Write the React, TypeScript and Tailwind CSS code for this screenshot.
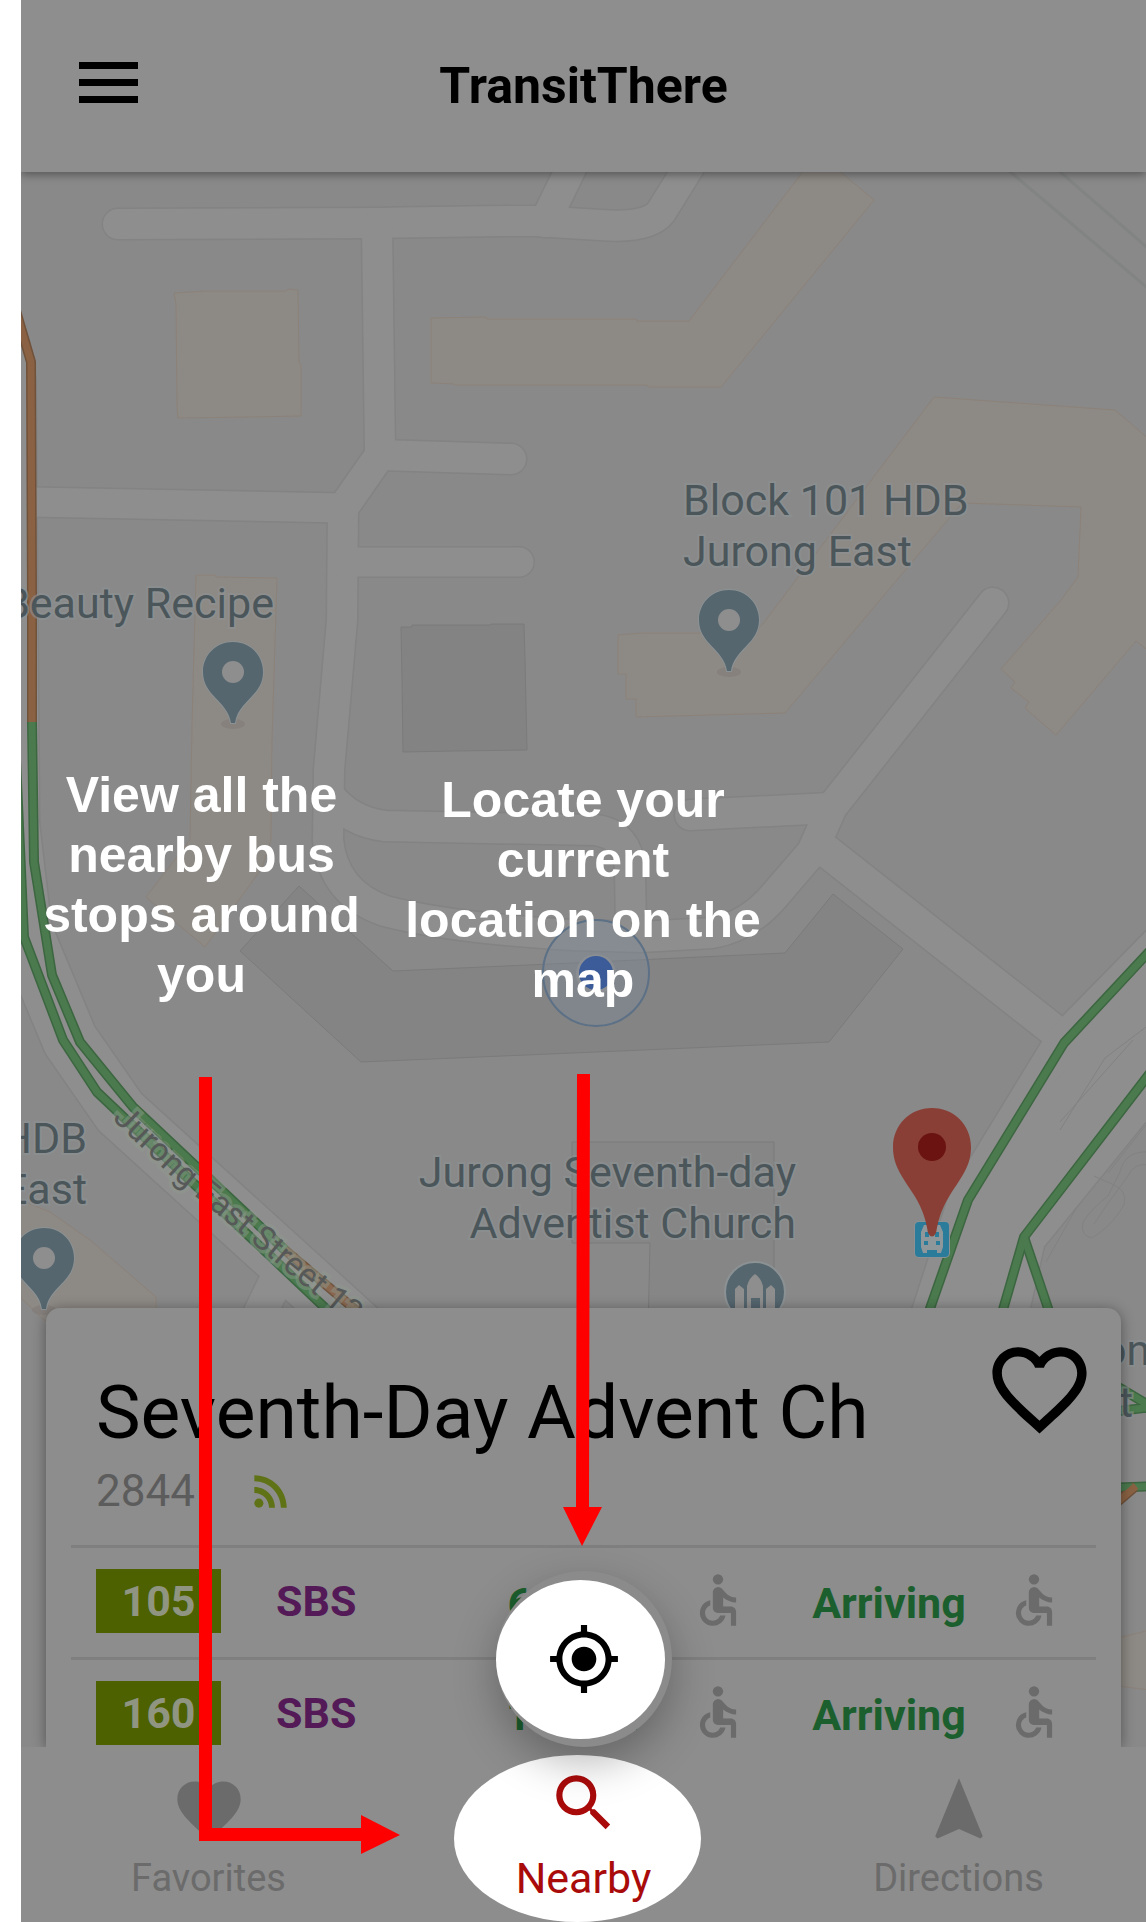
import React from "react";
import {
  MdAccessible,
  MdFavorite,
  MdFavoriteBorder,
  MdMyLocation,
  MdNavigation,
  MdRssFeed,
  MdSearch,
} from "react-icons/md";

const roads: { d: string; w: number }[] = [
  { d: "M118 224 L380 223 Q480 221 535 221 L600 225 Q648 229 661 212 L692 162", w: 31 },
  { d: "M545 222 L574 162", w: 31 },
  { d: "M377 225 L380 455 L343 508 L342 620 L329 770 L328 840 Q333 893 385 911 Q450 928 573 935 L640 937 L712 933 Q748 927 775 895 L812 852 L832 807 L993 603", w: 31 },
  { d: "M380 455 L511 459", w: 31 },
  { d: "M30 502 L343 508", w: 30 },
  { d: "M345 562 L519 562", w: 30 },
  { d: "M329 795 Q350 822 385 826 L595 830 Q628 834 630 870 L631 930", w: 31 },
  { d: "M690 815 L830 808", w: 31 },
  { d: "M825 850 L1070 1043", w: 33 },
  { d: "M4 300 L24 380 L28 880 L40 960", w: 24 },
  { d: "M4 760 L24 930 L70 1040 L120 1112 L360 1330", w: 56 },
  { d: "M286 1260 L252 1330", w: 34 },
  { d: "M1160 945 L1064 1043 L968 1200 L926 1330", w: 40 },
  { d: "M1160 1010 L1060 1130 L1000 1230 L975 1330", w: 70 },
  { d: "M1160 1070 L1024 1237 L1003 1330", w: 44 },
];

const beige = [
  "174,293 206,291 286,291 288,289 298,290 299,362 301,365 301,416 250,417 178,418 177,406 176,304",
  "431,318 486,317 487,319 636,319 637,321 689,321 808,165 832,165 874,200 721,387 648,387 647,385 455,385 454,384 431,383",
  "934,397 1115,410 1150,440 1150,652 1136,641 1056,735 1025,708 1029,702 1011,688 1015,682 1001,669 1061,600 1078,577 1081,507 962,503 880,600 785,713 636,717 636,699 626,699 626,674 618,674 618,635 642,633 752,633 762,625",
  "196,575 215,575 216,577 277,578 272,740 271,840 262,868 205,947 146,897 190,840 192,725",
  "15,1198 50,1212 90,1240 156,1297 156,1335 60,1335 21,1298",
];

const gray = [
  { p: "401,627 412,627 412,625 490,625 491,624 524,624 525,660 527,750 455,751 403,752 402,680", c: "#838383" },
  { p: "299,886 393,971 573,963 785,953 833,894 903,949 829,1042 573,1053 361,1062 337,1040 240,951", c: "#848484" },
  { p: "572,1142 774,1142 774,1330 648,1330 650,1243 572,1243", c: "#868686" },
];

const traffic: { d: string; c: string; e: string }[] = [
  { d: "M14 304 L31 362 L32 600 L32 722", c: "#8a6243", e: "#70513a" },
  { d: "M32 722 L34 862 L52 975 L80 1042 L133 1107 L285 1250", c: "#4b7a4e", e: "#3c6640" },
  { d: "M16 760 L24 937 L63 1040 L97 1092 L340 1322", c: "#4b7a4e", e: "#3c6640" },
  { d: "M285 1250 L365 1318", c: "#8a6850", e: "#70543f" },
  { d: "M1160 940 L1064 1043 L968 1200 L926 1320", c: "#4b7a4e", e: "#3c6640" },
  { d: "M1160 1060 L1024 1237 L1000 1320", c: "#4b7a4e", e: "#3c6640" },
  { d: "M1024 1237 L1052 1320", c: "#4b7a4e", e: "#3c6640" },
  { d: "M1110 1382 L1160 1412 M1110 1412 L1160 1406", c: "#4b7a4e", e: "#3c6640" },
  { d: "M1105 1488 L1160 1486", c: "#4b7a4e", e: "#3c6640" },
  { d: "M1115 1504 L1136 1486", c: "#8a6243", e: "#70513a" },
];

function PlacePin({ x, y }: { x: number; y: number }) {
  return (
    <g transform={`translate(${x} ${y})`}>
      <ellipse cx="0" cy="52" rx="12" ry="5" fill="#766f6c" opacity="0.3" />
      <path
        d="M0 -30 C17 -30 30 -17 30 0 C30 24 5 29 2 51 L-2 51 C-5 29 -30 24 -30 0 C-30 -17 -17 -30 0 -30 Z"
        fill="#55666f"
        stroke="#8c9294"
        strokeWidth="2"
        paintOrder="stroke"
      />
      <circle r="11" fill="#8e8e8e" />
    </g>
  );
}

function MapCanvas() {
  return (
    <svg
      aria-label="Map of Jurong East"
      role="img"
      viewBox="21 172 1125 1575"
      preserveAspectRatio="xMidYMid slice"
      className="absolute inset-0 h-full w-full font-[Roboto,sans-serif]"
    >
      <rect x="0" y="150" width="1200" height="1700" fill="#898989" />
      <g fill="none" stroke="#838383" strokeLinecap="round" strokeLinejoin="round">
        {roads.map((r) => (
          <path key={r.d} d={r.d} strokeWidth={r.w + 2} />
        ))}
      </g>
      <g fill="none" stroke="#8e8e8e" strokeLinecap="round" strokeLinejoin="round">
        {roads.map((r) => (
          <path key={r.d} d={r.d} strokeWidth={r.w - 1} />
        ))}
      </g>
      <g fill="none" stroke="#828383" strokeWidth="3">
        <path d="M1008 170 L1150 290" />
        <path d="M1058 170 L1150 250" />
      </g>
      <g fill="none" stroke="#828282" strokeWidth="1">
        <path d="M1150 1024 L1105 1058 Q1085 1090 1060 1130 M1133 1040 L1060 1122" />
        <path d="M1150 1120 L1108 1173 M1150 1152 Q1125 1150 1120 1172 L1108 1196 Q1092 1208 1083 1222 Q1080 1236 1092 1238 Q1112 1226 1124 1205 Q1128 1190 1112 1184 L1094 1176 M1150 1165 Q1134 1162 1128 1176 L1106 1206 L1094 1224" />
        <path d="M1077 1207 L1046 1262" />
      </g>
      <g fill="#8d8984" stroke="#8c8279" strokeWidth="1">
        {beige.map((p) => (
          <polygon key={p} points={p} />
        ))}
        <polygon points="1110,1640 1150,1630 1150,1690 1110,1685" />
      </g>
      <g stroke="#7b7b7b" strokeWidth="1">
        {gray.map((g) => (
          <polygon key={g.p} points={g.p} fill={g.c} />
        ))}
      </g>
      <g fill="none" strokeLinejoin="round">
        {traffic.map((t) => (
          <path key={t.d} d={t.d} stroke={t.e} strokeWidth="10" />
        ))}
        {traffic.map((t) => (
          <path key={t.d} d={t.d} stroke={t.c} strokeWidth="7" />
        ))}
      </g>

      <path id="street" d="M112 1119 L172 1177 L239 1232 L400 1366" fill="none" />
      <text fontSize="33" fill="#565958" stroke="#8e9a8e" strokeOpacity="0.45" strokeWidth="7" paintOrder="stroke">
        <textPath href="#street">Jurong East Street 13</textPath>
      </text>

      <circle cx="596" cy="973" r="53" fill="#7a8a98" fillOpacity="0.4" stroke="#5c7086" strokeWidth="2" />
      <circle cx="596" cy="974" r="20" fill="#8b8f94" />
      <circle cx="596" cy="973" r="17" fill="#3b5c98" />

      <g fontSize="43" fill="#4b565b" stroke="#8d9294" strokeOpacity="0.6" strokeWidth="4" paintOrder="stroke">
        <text x="683" y="515">Block 101 HDB</text>
        <text x="683" y="566">Jurong East</text>
        <text x="274" y="618" textAnchor="end">Beauty Recipe</text>
        <text x="87" y="1153" textAnchor="end">HDB</text>
        <text x="87" y="1204" textAnchor="end">East</text>
        <text x="796" y="1187" textAnchor="end">Jurong Seventh-day</text>
        <text x="796" y="1238" textAnchor="end">Adventist Church</text>
        <text x="1102" y="1365">on</text>
        <text x="1133" y="1417" textAnchor="end">t</text>
      </g>

      <PlacePin x={233} y={672} />
      <PlacePin x={729} y={620} />
      <PlacePin x={44} y={1258} />

      <g transform="translate(755 1292)">
        <circle r="30" fill="#55666f" stroke="#8c9294" strokeWidth="2" />
        <path
          d="M-20 20 V-3 L-16 -7 L-11 -3 V20 Z M-8 20 V-6 Q-6 -14 0 -18 Q6 -14 8 -6 V20 H5 V6 H-4 V20 Z M11 20 V-3 L16 -7 L20 -3 V20 Z"
          fill="#8e8e8e"
        />
      </g>

      <g transform="translate(915 1222)">
        <rect width="34" height="35" rx="4" fill="#2b7b9b" stroke="#8c9294" strokeWidth="2" paintOrder="stroke" />
        <path d="M9 3 H25 L28 10 V25 L26 31 H22 V28 H12 V31 H8 L6 25 V10 Z" fill="#8f979b" />
        <path d="M10 10 H14 V15 H10 Z M20 10 H24 V15 H20 Z M9 19 H13 V23 H9 Z M21 19 H25 V23 H21 Z" fill="#2b7b9b" />
      </g>
      <path
        d="M932 1108 C954 1108 971 1125 971 1147 C971 1166 962 1176 950 1195 C940 1211 938 1222 936 1233 Q932 1240 928 1233 C926 1222 924 1211 914 1195 C902 1176 893 1166 893 1147 C893 1125 910 1108 932 1108 Z"
        fill="#893f36"
      />
      <circle cx="932" cy="1147" r="14" fill="#6a1310" />
    </svg>
  );
}

const arrivals = [
  { bus: "105", operator: "SBS", next: "6 mins", later: "Arriving" },
  { bus: "160", operator: "SBS", next: "17 min", later: "Arriving" },
];

function Accessible() {
  return <MdAccessible aria-label="Wheelchair accessible" className="mx-auto block size-[62px] text-[#6b6b6b]" />;
}

function StopCard() {
  return (
    <section className="relative mx-[25px] rounded-t-[14px] bg-[#8d8d8d] px-[25px] shadow-[0_2px_14px_rgba(0,0,0,0.4)]">
      <div className="flex items-start justify-between pb-[29px] pl-[25px]">
        <div className="pt-[61px]">
          <h2 className="text-[75px] leading-[86px] whitespace-nowrap text-black">Seventh-Day Advent Ch</h2>
          <p className="mt-[11px] flex items-center text-[44px] leading-[50px] text-[#5c5c5c]">
            <span className="w-[150px]">2844</span>
            <MdRssFeed aria-label="Live" className="size-[50px] text-[#5f7316]" />
          </p>
        </div>
        <button aria-label="Add to favorites" className="mt-[25px]">
          <MdFavoriteBorder className="size-[113px] text-black" />
        </button>
      </div>
      <table className="w-full table-fixed text-[43px] leading-[64px] font-bold">
        <colgroup>
          <col className="w-[181px]" />
          <col />
          <col className="w-[165px]" />
          <col className="w-[126px]" />
          <col className="w-[216px]" />
          <col className="w-[73px]" />
          <col className="w-[26px]" />
        </colgroup>
        <tbody className="[&>tr:last-child>td]:pb-[2px]">
          {arrivals.map((a) => (
            <tr key={a.bus} className="border-t-3 border-[#7f7f7f] align-top *:pt-[21px] *:pb-[24px]">
              <td className="pl-[25px]">
                <span className="block w-[125px] bg-[#4d6100] text-center text-[#8f9580]">{a.bus}</span>
              </td>
              <td className="pl-[24px] text-[#541a57]">{a.operator}</td>
              <td className="text-center whitespace-nowrap text-[#1c5f2e]">
                <span className="block pt-1 leading-[60px]">{a.next}</span>
              </td>
              <td>
                <Accessible />
              </td>
              <td className="text-center text-[#1c5f2e]">
                <span className="block pt-1 leading-[60px]">{a.later}</span>
              </td>
              <td>
                <Accessible />
              </td>
              <td />
            </tr>
          ))}
        </tbody>
      </table>
    </section>
  );
}

function Tips() {
  return (
    <>
      <p className="absolute top-[765px] left-[31px] z-30 w-[341px] text-center font-['Liberation_Sans',Arial,sans-serif] text-[50px] leading-[60px] font-bold text-white">
        View all the nearby bus stops around you
      </p>
      <p className="absolute top-[770px] left-[402px] z-30 w-[362px] text-center font-['Liberation_Sans',Arial,sans-serif] text-[50px] leading-[60px] font-bold text-white">
        Locate your current location on the map
      </p>
      <svg
        aria-hidden="true"
        viewBox="0 0 1146 1922"
        preserveAspectRatio="none"
        className="pointer-events-none absolute inset-0 z-30 h-full w-full"
        fill="#ff0000"
      >
        <path d="M199 1077 H212 V1828 H361 V1815 L400 1835 L361 1854 V1841 H199 Z" />
        <path d="M577 1074 H590 L589 1507 H602 L582 1546 L563 1507 H576 Z" />
      </svg>
    </>
  );
}

export default function App() {
  return (
    <div className="relative bg-white pl-[21px] font-[Roboto,sans-serif]">
      <div className="flex min-h-screen flex-col overflow-hidden">
        <header className="relative z-20 flex h-[172px] items-center justify-center bg-[#8e8e8e] shadow-[0_3px_8px_rgba(0,0,0,0.35)]">
          <button aria-label="Menu" className="absolute left-[58px] mt-[-7px]">
            <svg viewBox="0 0 59 41" className="block h-[41px] w-[59px]" fill="#000">
              <path d="M0 0H59V7H0ZM0 17H59V24H0ZM0 34H59V41H0Z" />
            </svg>
          </button>
          <h1 className="text-[50px] leading-[60px] font-bold text-black">TransitThere</h1>
        </header>

        <main className="relative z-10 flex flex-1 flex-col justify-end">
          <MapCanvas />
          <div className="relative overflow-hidden pt-5">
            <StopCard />
          </div>
          <button
            aria-label="Locate me"
            className="absolute bottom-0 left-1/2 flex size-[176px] -translate-x-1/2 items-center justify-center rounded-full bg-[#8b8b8b] shadow-[0_16px_44px_rgba(0,0,0,0.28)]"
          >
            <span className="mr-[6px] flex h-[159px] w-[169px] items-center justify-center rounded-[50%] bg-white">
              <MdMyLocation className="ml-[6px] size-[74px] text-black" />
            </span>
          </button>
        </main>

        <nav className="relative flex h-[175px] items-end bg-[#8d8d8d] text-[38px] leading-[44px] text-[#6b6b6b]">
          <span className="absolute bottom-0 left-1/2 -ml-[130px] h-[167px] w-[247px] rounded-[50%] bg-white" />
          <a href="#favorites" className="flex flex-1 flex-col items-center pb-[22px]">
            <MdFavorite className="size-[76px]" />
            <span className="mt-2">Favorites</span>
          </a>
          <a
            href="#nearby"
            aria-current="page"
            className="relative flex flex-1 flex-col items-center pb-[22px] text-[#a90b0b]"
          >
            <MdSearch className="size-[74px]" />
            <span className="mt-4 text-[43px]">Nearby</span>
          </a>
          <a href="#directions" className="flex flex-1 flex-col items-center pb-[22px]">
            <MdNavigation className="size-[76px]" />
            <span className="mt-2">Directions</span>
          </a>
        </nav>
      </div>
      <Tips />
    </div>
  );
}
